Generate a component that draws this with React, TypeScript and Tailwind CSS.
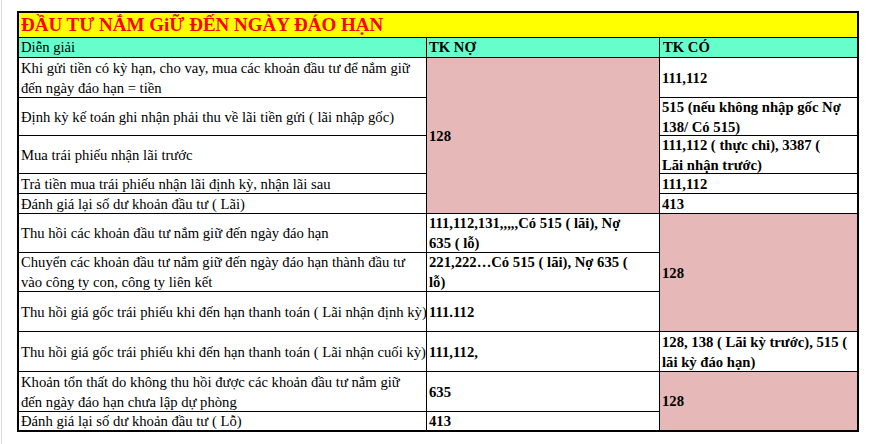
import React from "react";

type Cell = {
  text: React.ReactNode;
  bold?: boolean;
  pink?: boolean;
  span?: string;
};

const cell = "flex items-center overflow-hidden whitespace-nowrap px-[2px] leading-[20px]";

function C({ text, bold, pink, span }: Cell) {
  return (
    <div className={`${cell} ${bold ? "font-bold" : ""} ${pink ? "bg-[#e6b8b7]" : "bg-white"} ${span ?? ""}`}>
      <div>{text}</div>
    </div>
  );
}

export default function App() {
  return (
    <div className="relative h-[444px] w-[872px] bg-white font-['Liberation_Serif',serif] text-[14.67px] text-black">
      {/* excel column edge */}
      <div className="absolute left-[1px] top-0 h-full w-px bg-[#d9d9d9]" />
      <div className="pl-[17px] pt-[11px]">
        <div className="w-[842px] border-2 border-black">
          <div className="grid grid-cols-[407px_232px_197px] grid-rows-[24px_19px_39px_37px_37px_19px_19px_38px_38px_39px_39px_39px_18px] gap-px bg-black">
            <div className="col-span-3 flex items-center bg-[#ffff00] px-[2px] text-[19px] font-bold leading-[24px] text-[#ff0000]">
              ĐẦU TƯ NẮM GiỮ ĐẾN NGÀY ĐÁO HẠN
            </div>
            <div className="flex items-center bg-[#66ffcc] px-[2px] leading-[19px]">Diễn giải</div>
            <div className="flex items-center bg-[#66ffcc] px-[2px] font-bold leading-[19px]">TK NỢ</div>
            <div className="flex items-center bg-[#66ffcc] px-[3px] font-bold leading-[19px]">TK CÓ</div>

            <C text={<>Khi gửi tiền có kỳ hạn, cho vay, mua các khoản đầu tư để nắm giữ<br />đến ngày đáo hạn = tiền</>} />
            <C text="128" bold pink span="row-span-5" />
            <C text="111,112" bold />

            <C text="Định kỳ kế toán ghi nhận phải thu về lãi tiền gửi ( lãi nhập gốc)" />
            <C text={<>515 (nếu không nhập gốc Nợ<br />138/ Có 515)</>} bold />

            <C text="Mua trái phiếu nhận lãi trước" />
            <C text={<>111,112 ( thực chi), 3387 (<br />Lãi nhận trước)</>} bold />

            <C text="Trả tiền mua trái phiếu nhận lãi định kỳ, nhận lãi sau" />
            <C text="111,112" bold />

            <C text="Đánh giá lại số dư khoản đầu tư ( Lãi)" />
            <C text="413" bold />

            <C text="Thu hồi các khoản đầu tư nắm giữ đến ngày đáo hạn" />
            <C text={<>111,112,131,,,,,Có 515 ( lãi), Nợ<br />635 ( lỗ)</>} bold />
            <C text="128" bold pink span="row-span-3" />

            <C text={<>Chuyển các khoản đầu tư nắm giữ đến ngày đáo hạn thành đầu tư<br />vào công ty con, công ty liên kết</>} />
            <C text={<>221,222…Có 515 ( lãi), Nợ 635 (<br />lỗ)</>} bold />

            <C text="Thu hồi giá gốc trái phiếu khi đến hạn thanh toán ( Lãi nhận định kỳ)" />
            <C text="111.112" bold />

            <C text="Thu hồi giá gốc trái phiếu khi đến hạn thanh toán ( Lãi nhận cuối kỳ)" />
            <C text="111,112," bold />
            <C text={<>128, 138 ( Lãi kỳ trước), 515 (<br />lãi kỳ đáo hạn)</>} bold />

            <C text={<>Khoản tổn thất do không thu hồi được các khoản đầu tư nắm giữ<br />đến ngày đáo hạn chưa lập dự phòng</>} />
            <C text="635" bold />
            <C text="128" bold pink span="row-span-2" />

            <C text="Đánh giá lại số dư khoản đầu tư ( Lỗ)" />
            <C text="413" bold />
          </div>
        </div>
      </div>
    </div>
  );
}
